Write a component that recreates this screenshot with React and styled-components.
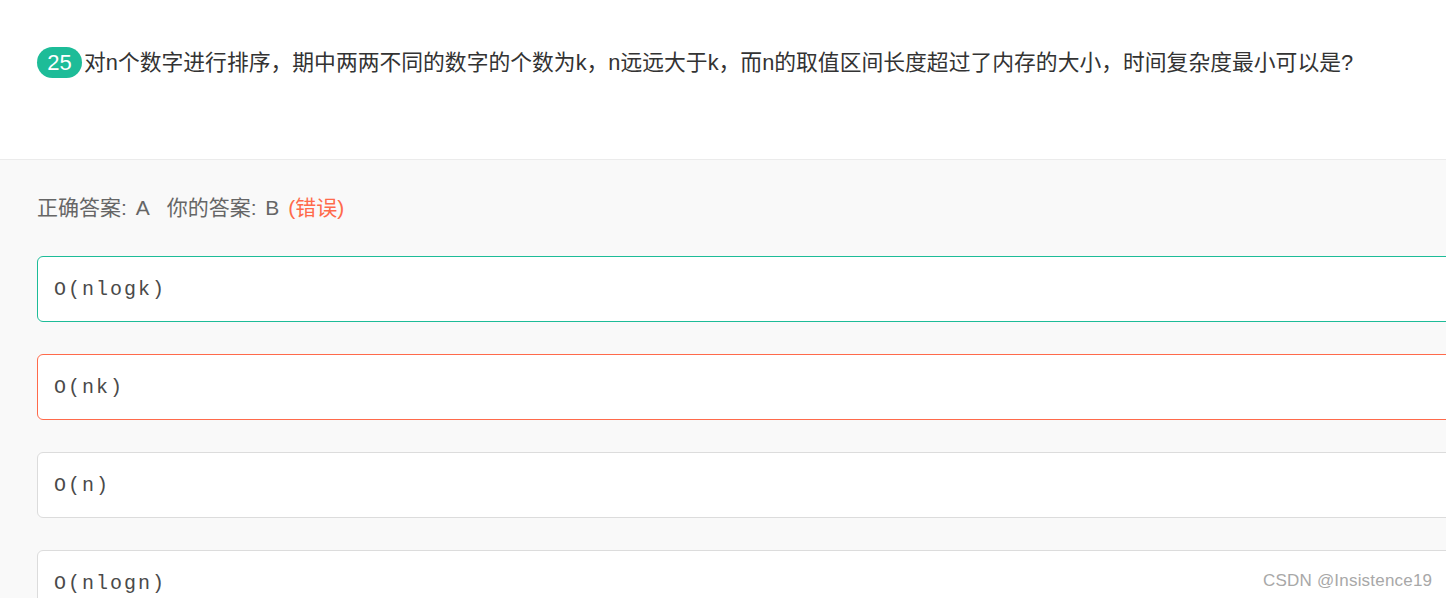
import React from 'react';
import styled, { createGlobalStyle } from 'styled-components';

const GlobalStyle = createGlobalStyle`
  html, body {
    margin: 0;
    padding: 0;
    overflow: hidden;
    background: #f9f9f9;
  }
  body {
    font-family: "Liberation Sans", "Noto Sans CJK SC", sans-serif;
  }
`;

const Page = styled.div`
  width: 1520px;
  height: 598px;
  background: #f9f9f9;
  position: relative;
`;

const QuestionHead = styled.div`
  background: #fff;
  height: 160px;
  box-sizing: border-box;
  padding: 47px 0 0 37px;
  border-bottom: 1px solid #ebebeb;
  display: flex;
  align-items: flex-start;
`;

const Badge = styled.span`
  display: inline-flex;
  align-items: center;
  justify-content: center;
  width: 45px;
  height: 31px;
  border-radius: 16px;
  background: #1dbc98;
  color: #fff;
  font-size: 22px;
  font-family: "Liberation Sans", "Noto Sans CJK SC", sans-serif;
  flex-shrink: 0;
`;

const QuestionText = styled.span`
  font-size: 21.8px;
  line-height: 31px;
  color: #333;
  margin-left: 2px;
  font-family: "Liberation Sans", "Noto Sans CJK SC", sans-serif;
`;

const Body = styled.div`
  padding: 31px 0 0 37px;
`;

const AnswerLine = styled.div`
  font-size: 21px;
  line-height: 34px;
  color: #666;
  word-spacing: 3px;
  font-family: "Liberation Sans", "Noto Sans CJK SC", sans-serif;
  margin-bottom: 31px;
`;

const Gap = styled.span`
  display: inline-block;
  width: 17px;
`;

const Wrong = styled.span`
  color: #ff6a4b;
`;

const OptionList = styled.div`
  display: flex;
  flex-direction: column;
  gap: 32px;
`;

const Option = styled.div`
  height: 66px;
  box-sizing: border-box;
  background: #fff;
  border: 1px solid ${(p) => p.border};
  border-radius: 6px;
  display: flex;
  align-items: center;
  padding-left: 16px;
  font-family: "Liberation Mono", "Noto Sans CJK SC", monospace;
  font-size: 20px;
  letter-spacing: 2px;
  color: #4a4a4a;
`;

const Watermark = styled.div`
  position: absolute;
  left: 1263px;
  top: 571px;
  font-size: 17px;
  letter-spacing: 0.2px;
  color: #a8a8a8;
  font-family: "Liberation Sans", sans-serif;
`;

const options = [
  { text: 'O(nlogk)', border: '#1dbc98' },
  { text: 'O(nk)', border: '#ff6a4b' },
  { text: 'O(n)', border: '#dcdcdc' },
  { text: 'O(nlogn)', border: '#dcdcdc' },
];

export default function App() {
  return (
    <Page>
      <GlobalStyle />
      <QuestionHead>
        <Badge>25</Badge>
        <QuestionText>
          对n个数字进行排序，期中两两不同的数字的个数为k，n远远大于k，而n的取值区间长度超过了内存的大小，时间复杂度最小可以是?
        </QuestionText>
      </QuestionHead>
      <Body>
        <AnswerLine>
          正确答案: A<Gap />你的答案: B <Wrong>(错误)</Wrong>
        </AnswerLine>
        <OptionList>
          {options.map((o) => (
            <Option key={o.text} border={o.border}>{o.text}</Option>
          ))}
        </OptionList>
      </Body>
      <Watermark>CSDN @Insistence19</Watermark>
    </Page>
  );
}
